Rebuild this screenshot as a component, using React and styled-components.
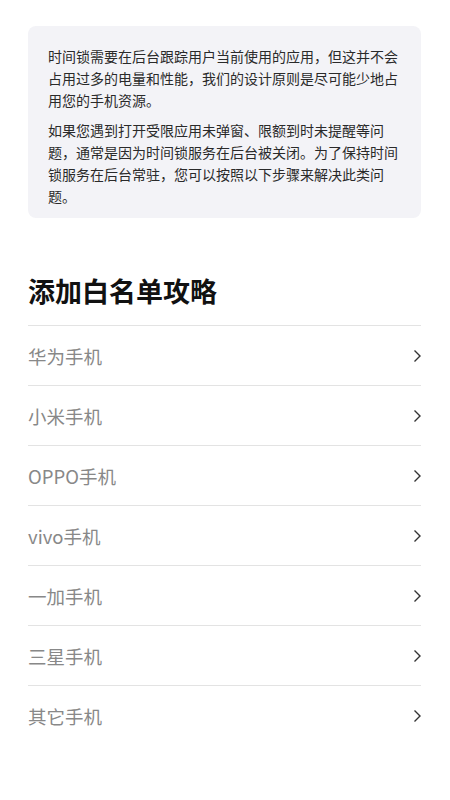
import React from "react";
import styled, { createGlobalStyle } from "styled-components";

const GlobalStyle = createGlobalStyle`
  body {
    margin: 0;
    background: #fff;
    font-family: "Noto Sans CJK SC", "Noto Sans", sans-serif;
  }
`;

const Page = styled.div`
  padding: 26px 29px 40px 28px;
`;

const Notice = styled.div`
  background: #f3f3f7;
  border-radius: 8px;
  padding: 19px 20px 11px;

  p {
    margin: 0 0 8px;
    font-size: 14px;
    line-height: 22px;
    color: #2a2a2a;
  }

  p:last-child {
    margin-bottom: 0;
  }
`;

const Title = styled.h2`
  margin: 54px 0 15px;
  font-size: 27px;
  line-height: 38px;
  font-weight: 700;
  color: #111;
`;

const List = styled.ul`
  margin: 0;
  padding: 0;
  list-style: none;
`;

const Row = styled.li`
  display: flex;
  align-items: center;
  justify-content: space-between;
  height: 60px;
  border-top: 1px solid #e3e3e3;
  font-size: 18.5px;
  color: #888;
  box-sizing: border-box;

  svg {
    flex: none;
    margin-right: -1px;
  }
`;

const Chevron = () => (
  <svg width="10" height="14" viewBox="0 0 10 14">
    <path d="M2.5 1.5 L8 7 L2.5 12.5" fill="none" stroke="#333" strokeWidth="1.4" />
  </svg>
);

const phones = ["华为手机", "小米手机", "OPPO手机", "vivo手机", "一加手机", "三星手机", "其它手机"];

const App = () => {
  return (
    <Page>
      <GlobalStyle />
      <Notice>
        <p>
          时间锁需要在后台跟踪用户当前使用的应用，但这并不会占用过多的电量和性能，我们的设计原则是尽可能少地占用您的手机资源。
        </p>
        <p>
          如果您遇到打开受限应用未弹窗、限额到时未提醒等问题，通常是因为时间锁服务在后台被关闭。为了保持时间锁服务在后台常驻，您可以按照以下步骤来解决此类问题。
        </p>
      </Notice>
      <Title>添加白名单攻略</Title>
      <List>
        {phones.map((name) => (
          <Row key={name}>
            <span>{name}</span>
            <Chevron />
          </Row>
        ))}
      </List>
    </Page>
  );
};

export default App;
